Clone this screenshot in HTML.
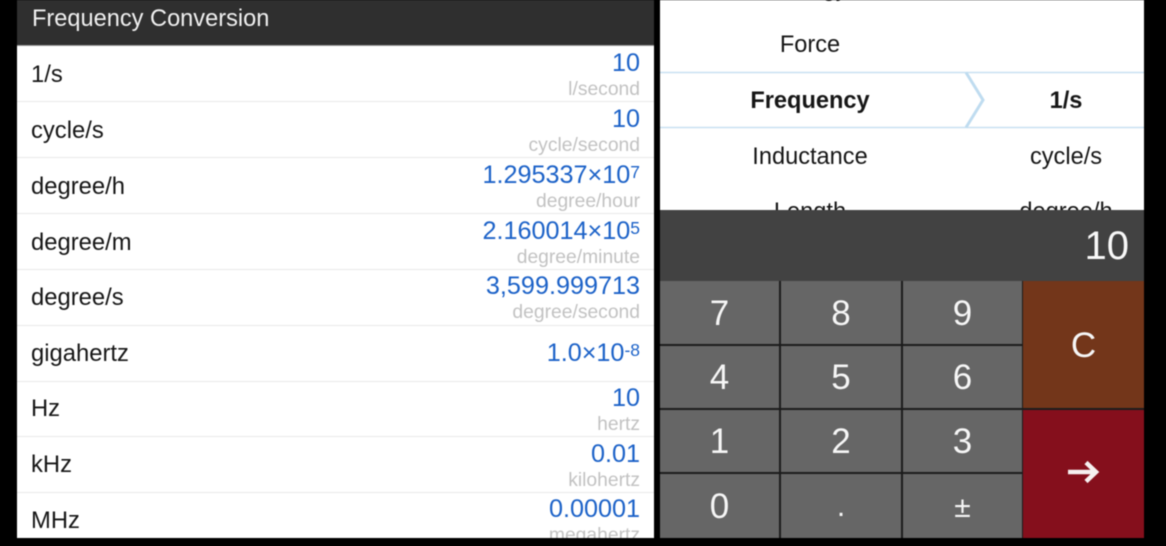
<!DOCTYPE html>
<html><head><meta charset="utf-8">
<style>
*{margin:0;padding:0;box-sizing:border-box}
html,body{width:1166px;height:546px;background:#000;overflow:hidden;font-family:"Liberation Sans",sans-serif}
.a{position:absolute;white-space:nowrap}
#root{position:absolute;left:0;top:0;width:1166px;height:546px;background:#000;filter:blur(.4px);overflow:hidden}
#left{position:absolute;left:17px;top:0;width:637px;height:538px;background:#fff;overflow:hidden}
#hd{position:absolute;left:0;top:0;width:637px;height:46px;background:#2f2f2f;border-bottom:1px solid #999;color:#f0f0f0;font-size:23.6px;line-height:39px;padding-left:15px}
.ln{position:absolute;left:0;width:637px;height:1px;background:#e8e8e8}
.n{left:14px;font-size:23.8px;color:#161616;line-height:26px}
.v{right:14px;font-size:25.2px;color:#1c62c8;line-height:26px;text-align:right}
.v sup{font-size:17.500px;line-height:0;vertical-align:5px}
.u{right:14px;font-size:19.300px;color:#c2c2c2;line-height:22px;text-align:right}
#right{position:absolute;left:660px;top:0;width:484px;height:538px;background:#fff;overflow:hidden}
.p{font-size:23.6px;color:#161616;line-height:26px;text-align:center}
#pad{position:absolute;left:0;top:281px;width:484px;height:257px;background:#1c1c1c}
.k{position:absolute;background:#666;color:#f6f6f6;font-size:35px;text-align:center}
</style></head><body>
<div id="root">
<div id="left">
<div id="hd">Frequency Conversion</div>
<div class="ln" style="top:101px"></div><div class="ln" style="top:157px"></div><div class="ln" style="top:213px"></div><div class="ln" style="top:269px"></div><div class="ln" style="top:325px"></div><div class="ln" style="top:381px"></div><div class="ln" style="top:436px"></div><div class="ln" style="top:492px"></div>
<div class="a n" style="top:62px">1/s</div>
<div class="a n" style="top:118px">cycle/s</div>
<div class="a n" style="top:174px">degree/h</div>
<div class="a n" style="top:230px">degree/m</div>
<div class="a n" style="top:285px">degree/s</div>
<div class="a n" style="top:341px">gigahertz</div>
<div class="a n" style="top:396px">Hz</div>
<div class="a n" style="top:452px">kHz</div>
<div class="a n" style="top:508px">MHz</div>
<div class="a v" style="top:50px">10</div><div class="a u" style="top:79px">l/second</div>
<div class="a v" style="top:106px">10</div><div class="a u" style="top:135px">cycle/second</div>
<div class="a v" style="top:162px">1.295337×10<sup>7</sup></div><div class="a u" style="top:191px">degree/hour</div>
<div class="a v" style="top:218px">2.160014×10<sup>5</sup></div><div class="a u" style="top:247px">degree/minute</div>
<div class="a v" style="top:273px">3,599.999713</div><div class="a u" style="top:302px">degree/second</div>
<div class="a v" style="top:340px">1.0×10<sup>-8</sup></div>
<div class="a v" style="top:385px">10</div><div class="a u" style="top:414px">hertz</div>
<div class="a v" style="top:441px">0.01</div><div class="a u" style="top:470px">kilohertz</div>
<div class="a v" style="top:496px">0.00001</div><div class="a u" style="top:525px">megahertz</div>
</div>
<div id="right">
<div class="a p" style="left:0;width:300px;top:-24px">Energy</div>
<div class="a p" style="left:0;width:300px;top:32px">Force</div>
<div class="a p" style="left:0;width:300px;top:88px;font-weight:bold">Frequency</div>
<div class="a p" style="left:0;width:300px;top:144px">Inductance</div>
<div class="a p" style="left:0;width:300px;top:199px">Length</div>
<div class="a p" style="left:306px;width:200px;top:88px;font-weight:bold">1/s</div>
<div class="a p" style="left:306px;width:200px;top:144px">cycle/s</div>
<div class="a p" style="left:306px;width:200px;top:199px">degree/h</div>
<svg class="a" style="left:0;top:70px" width="484" height="60"><path d="M0 2.500H484M0 57.500H484" fill="none" stroke="#c9e1f2" stroke-width="1.500"/><path d="M306 2.500L323 30L306 57.500" fill="none" stroke="#bfdcf0" stroke-width="3"/></svg>
<div class="a" style="left:0;top:210px;width:484px;height:71px;background:#424242;color:#f8f8f8;font-size:40px;line-height:72px;text-align:right;padding-right:15px">10</div>
<div id="pad"></div>
<div class="k" style="left:0;top:281px;width:119px;height:63px;line-height:65px">7</div>
<div class="k" style="left:121px;top:281px;width:120px;height:63px;line-height:65px">8</div>
<div class="k" style="left:243px;top:281px;width:119px;height:63px;line-height:65px">9</div>
<div class="k" style="left:0;top:346px;width:119px;height:62px;line-height:64px">4</div>
<div class="k" style="left:121px;top:346px;width:120px;height:62px;line-height:64px">5</div>
<div class="k" style="left:243px;top:346px;width:119px;height:62px;line-height:64px">6</div>
<div class="k" style="left:0;top:410px;width:119px;height:62px;line-height:64px">1</div>
<div class="k" style="left:121px;top:410px;width:120px;height:62px;line-height:64px">2</div>
<div class="k" style="left:243px;top:410px;width:119px;height:62px;line-height:64px">3</div>
<div class="k" style="left:0;top:474px;width:119px;height:64px;line-height:66px">0</div>
<div class="k" style="left:121px;top:474px;width:120px;height:64px;line-height:66px;font-size:30px">.</div>
<div class="k" style="left:243px;top:474px;width:119px;height:64px;line-height:68px;font-size:30px">±</div>
<div class="k" style="left:363px;top:281px;width:121px;height:127px;line-height:129px;background:#73361a">C</div>
<div class="k" style="left:363px;top:410px;width:121px;height:128px;background:#850f1c">
<svg class="a" style="left:44px;top:48px" width="34" height="28"><path d="M1 14H29M19 4.500L29 14L19 23.500" fill="none" stroke="#f6f0f0" stroke-width="4.500"/></svg></div>
</div>
</div>
</body></html>
